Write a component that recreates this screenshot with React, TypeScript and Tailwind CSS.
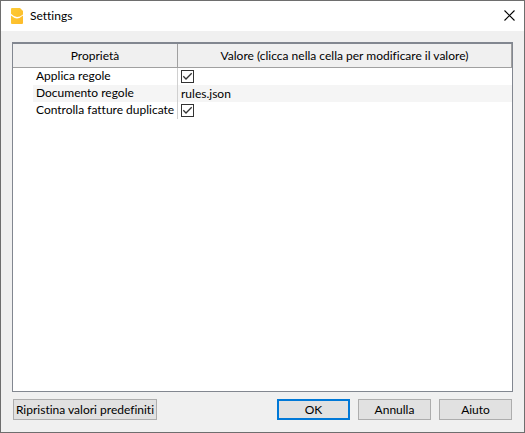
import { useState } from "react";

const buttonBase = "h-[21px] whitespace-nowrap border bg-[#e1e1e1] text-center leading-[18px]";

function DocumentIcon() {
  return (
    <svg viewBox="0 0 12 16" className="h-4 w-3" aria-hidden="true">
      <defs>
        <linearGradient id="sheet" x1="0" y1="0" x2="1" y2="1">
          <stop offset="0" stopColor="#fdcb35" />
          <stop offset="1" stopColor="#fdbb2a" />
        </linearGradient>
      </defs>
      <path d="M1 0H9L12 3V15Q12 16 11 16H1Q0 16 0 15V1Q0 0 1 0Z" fill="url(#sheet)" />
      <path d="M0 5.8Q3 9 6 9Q9 9 12 6.4V7.6Q9 10.4 6 10.4Q3 10.4 0 7.6Z" fill="#fff" />
    </svg>
  );
}

function CheckCell({ id, label }: { id: string; label: string }) {
  const [checked, setChecked] = useState(true);
  return (
    <span className="relative ml-[3px] block size-[13px]">
      <input
        id={id}
        type="checkbox"
        aria-label={label}
        checked={checked}
        onChange={(e) => setChecked(e.target.checked)}
        className="block size-[13px] appearance-none border border-[#333] bg-white"
      />
      {checked && (
        <svg viewBox="0 0 13 13" className="pointer-events-none absolute inset-0 size-[13px]" aria-hidden="true">
          <path d="M2.3 6.3L5 9L10.7 3.3" fill="none" stroke="#333" strokeWidth="1.3" />
        </svg>
      )}
    </span>
  );
}

export default function App() {
  const [file, setFile] = useState("rules.json");
  return (
    <div className="flex min-h-screen flex-col border border-[#6e6e6e] bg-[#f0f0f0] font-['Lato','Open_Sans',sans-serif] text-[12px] text-black [font-variant-ligatures:none]">
      <header className="flex h-[30px] items-center bg-white pl-[10px] pr-[9px]">
        <DocumentIcon />
        <h1 className="ml-[7px] leading-4">Settings</h1>
        <button type="button" aria-label="Close" className="ml-auto pb-px">
          <svg viewBox="0 0 11 11" className="size-[11px]" aria-hidden="true">
            <path d="M0.5 0.5L10.5 10.5M10.5 0.5L0.5 10.5" stroke="#000" strokeWidth="1.1" />
          </svg>
        </button>
      </header>
      <main className="flex flex-1 flex-col px-[11px] pb-3 pt-[11px]">
        <div className="flex-1 border border-t-2 border-[#828790] bg-white">
          <table className="w-full table-fixed border-separate border-spacing-0">
            <colgroup>
              <col className="w-5" />
              <col className="w-[145px]" />
              <col />
            </colgroup>
            <thead>
              <tr className="h-6 bg-[#f0f0f0]">
                <th colSpan={2} className="border-b border-r border-[#a0a0a0] p-0 font-normal leading-4">
                  Proprietà
                </th>
                <th className="border-b border-r border-[#a0a0a0] p-0 font-normal leading-4">
                  Valore (clicca nella cella per modificare il valore)
                </th>
              </tr>
            </thead>
            <tbody className="whitespace-nowrap leading-4">
              <tr className="h-[17px]">
                <td className="p-0" />
                <td className="border-r border-[#d0d0d0] p-0 pl-[3px] align-top">
                  <label htmlFor="apply" className="block leading-4">Applica regole</label>
                </td>
                <td className="p-0">
                  <CheckCell id="apply" label="Applica regole" />
                </td>
              </tr>
              <tr className="h-[17px]">
                <td className="p-0" />
                <td className="border-r border-[#d0d0d0] bg-[#f5f5f5] p-0 pl-[3px] align-top">
                  <label htmlFor="file" className="block leading-4">Documento regole</label>
                </td>
                <td className="bg-[#f5f5f5] p-0">
                  <input
                    id="file"
                    type="text"
                    value={file}
                    onChange={(e) => setFile(e.target.value)}
                    className="block h-4 w-full bg-transparent pl-[3px] leading-4 outline-none"
                  />
                </td>
              </tr>
              <tr className="h-[17px]">
                <td className="p-0" />
                <td className="border-r border-[#d0d0d0] p-0 pl-[3px] align-top">
                  <label htmlFor="dupes" className="block leading-4">Controlla fatture duplicate</label>
                </td>
                <td className="p-0">
                  <CheckCell id="dupes" label="Controlla fatture duplicate" />
                </td>
              </tr>
            </tbody>
          </table>
        </div>
        <footer className="flex gap-2 px-px pt-[7px]">
          <button type="button" className={`${buttonBase} mr-auto w-[144px] border-[#adadad]`}>
            Ripristina valori predefiniti
          </button>
          <button type="button" className="h-[21px] w-[73px] border-2 border-[#0078d7] bg-[#e1e1e1] leading-4">
            OK
          </button>
          <button type="button" className={`${buttonBase} w-[73px] border-[#adadad]`}>
            Annulla
          </button>
          <button type="button" className={`${buttonBase} w-[73px] border-[#adadad]`}>
            Aiuto
          </button>
        </footer>
      </main>
    </div>
  );
}
